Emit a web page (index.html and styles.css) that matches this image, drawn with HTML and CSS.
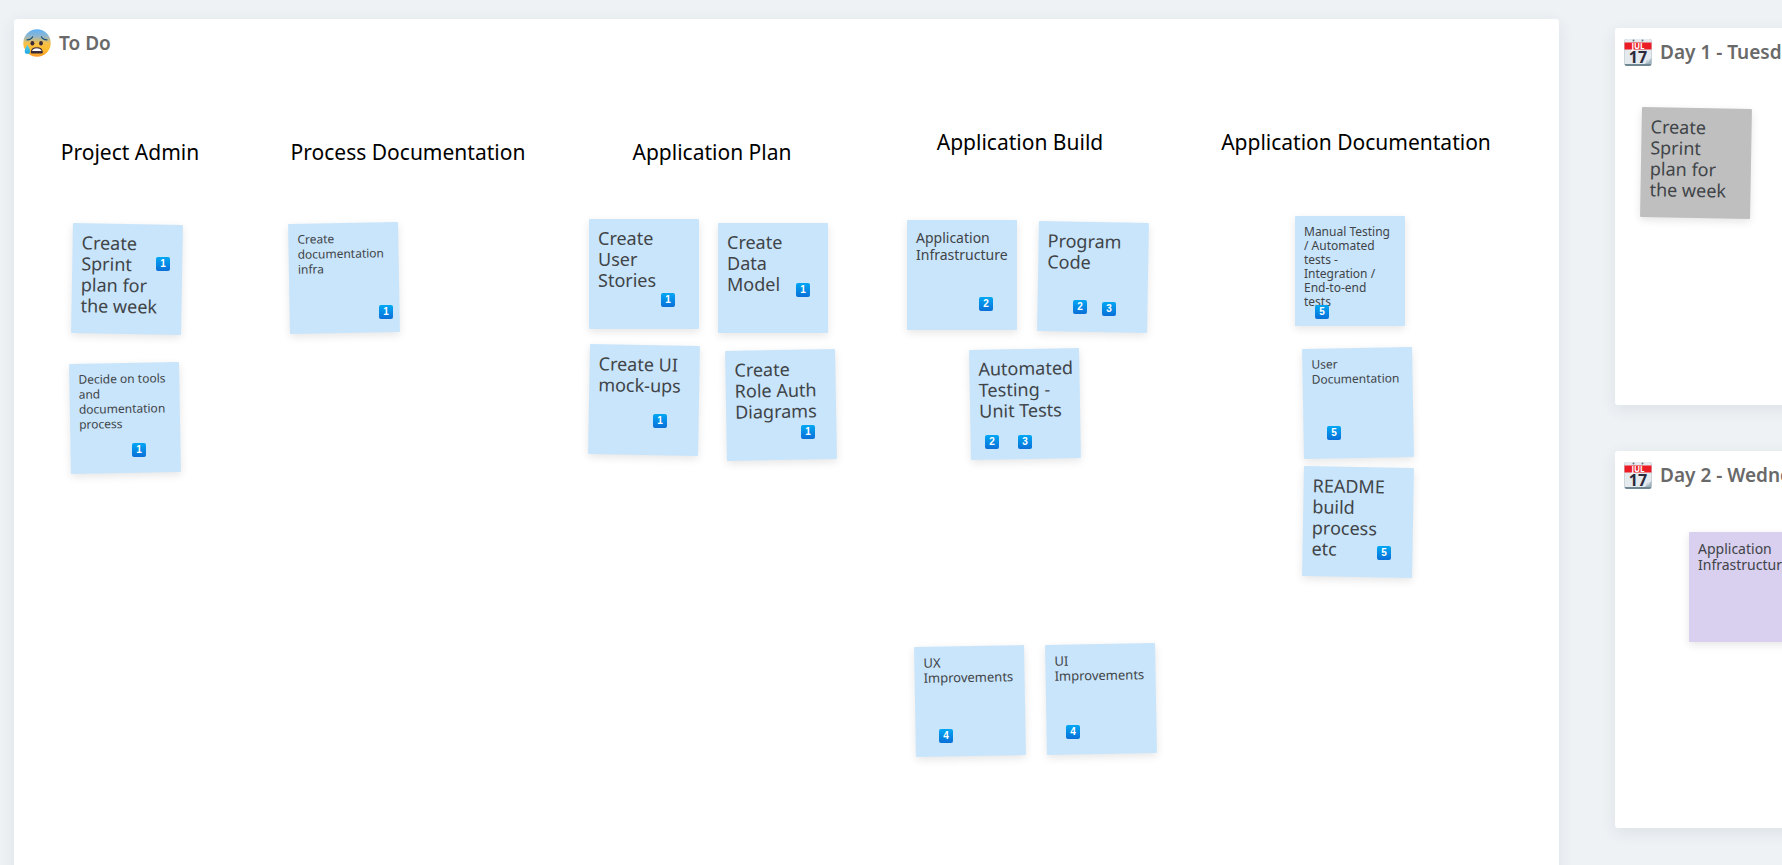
FILE: index.html
```html
<!DOCTYPE html>
<html lang="en">
<head>
<meta charset="utf-8">
<title>Sprint board</title>
<link rel="stylesheet" href="styles.css">
</head>
<body>
<svg class="defs" aria-hidden="true">
  <defs>
    <linearGradient id="face" x1="0" y1="0" x2="0" y2="1">
      <stop offset="0" stop-color="#5fb2f7"/>
      <stop offset=".25" stop-color="#8fb6cf"/>
      <stop offset=".5" stop-color="#f3c04a"/>
      <stop offset=".75" stop-color="#ffbc2c"/>
      <stop offset="1" stop-color="#fb9a2c"/>
    </linearGradient>
    <linearGradient id="drop" x1="0" y1="0" x2="0" y2="1">
      <stop offset="0" stop-color="#5fd0e8"/>
      <stop offset="1" stop-color="#19a9e4"/>
    </linearGradient>
    <symbol id="calendar" viewBox="0 0 28 28">
      <path d="M.5 3q0-2 2-2h23q2 0 2 2v23q0 2-2 2h-23q-2 0-2-2z" fill="#6f8792"/>
      <path d="M.5 3q0-2 2-2h23q2 0 2 2v23h-27z" fill="#e4eaee"/>
      <path d="M20.500 26q2-1.200 2.500-3.500 2.500-.5 4.500-2.500v6z" fill="#9fb3be"/>
      <path d="M21 25.800q2.500-1 2.300-3.600 2.700 0 4-2.200-1 4-6.300 5.800z" fill="#cbd7de"/>
      <path d="M.5 4.500h27v7h-27z" fill="#ec1c27"/>
      <circle cx="9.500" cy="2.500" r="1" fill="#66747c"/>
      <circle cx="18.500" cy="2.500" r="1" fill="#66747c"/>
      <text x="14" y="11" text-anchor="middle" class="cal-month">JUL</text>
      <text x="14" y="24.500" text-anchor="middle" class="cal-day">17</text>
    </symbol>
  </defs>
</svg>
<main class="board">
  <section class="frame frame-todo">
    <h1 class="frame-title">
      <svg class="emoji" viewBox="0 0 28 28" aria-hidden="true">
        <circle cx="14" cy="14" r="13.700" fill="url(#face)"/>
        <path d="M4 10.800q4.200-.2 5.500-2.900M24 10.800q-4.200-.2-5.500-2.900" fill="none" stroke="#17507c" stroke-width="1.200" stroke-linecap="round"/>
        <ellipse cx="9.400" cy="14.300" rx="1.900" ry="2.300" fill="#3b2b38"/>
        <ellipse cx="18" cy="14.300" rx="1.900" ry="2.300" fill="#3b2b38"/>
        <path d="M7.800 23.500q0-5.200 6-5.200t6 5.200q0 1-1 1h-10q-1 0-1-1z" fill="#3b2b38"/>
        <path d="M9.200 21.300q1.300-2 4.600-2t4.600 2v.7h-9.200z" fill="#fff"/>
        <path d="M4.400 15.800q2.700 3.700 2.700 6.100 0 2.900-2.700 2.900t-2.700-2.900q0-2.400 2.700-6.100z" fill="url(#drop)"/>
      </svg>
      To Do
    </h1>

    <h2 class="heading h-admin">Project Admin</h2>
    <h2 class="heading h-process">Process Documentation</h2>
    <h2 class="heading h-plan">Application Plan</h2>
    <h2 class="heading h-build">Application Build</h2>
    <h2 class="heading h-docs">Application Documentation</h2>

    <article class="note large tilt-right n-sprint">Create<br>Sprint<br>plan for<br>the week</article>
    <article class="note small tilt-left n-tools">Decide on tools<br>and<br>documentation<br>process</article>
    <article class="note small tilt-left n-docinfra">Create<br>documentation<br>infra</article>
    <article class="note large n-stories">Create<br>User<br>Stories</article>
    <article class="note large n-data">Create<br>Data<br>Model</article>
    <article class="note large tilt-right n-mock">Create UI<br>mock-ups</article>
    <article class="note large tilt-left n-auth">Create<br>Role Auth<br>Diagrams</article>
    <article class="note medium n-appinfra">Application<br>Infrastructure</article>
    <article class="note large tilt-right n-code">Program<br>Code</article>
    <article class="note large tilt-left n-unit">Automated<br>Testing -<br>Unit Tests</article>
    <article class="note tiny n-manual">Manual Testing<br>/ Automated<br>tests -<br>Integration /<br>End-to-end<br>tests</article>
    <article class="note small tilt-left n-userdoc">User<br>Documentation</article>
    <article class="note large tilt-right n-readme">README<br>build<br>process<br>etc</article>
    <article class="note regular tilt-left n-ux">UX<br>Improvements</article>
    <article class="note regular tilt-left n-ui">UI<br>Improvements</article>

    <span class="badge b-sprint">1</span>
    <span class="badge b-tools">1</span>
    <span class="badge b-docinfra">1</span>
    <span class="badge b-stories">1</span>
    <span class="badge b-data">1</span>
    <span class="badge b-mock">1</span>
    <span class="badge b-auth">1</span>
    <span class="badge b-appinfra">2</span>
    <span class="badge b-code-a">2</span>
    <span class="badge b-code-b">3</span>
    <span class="badge b-unit-a">2</span>
    <span class="badge b-unit-b">3</span>
    <span class="badge b-manual">5</span>
    <span class="badge b-userdoc">5</span>
    <span class="badge b-readme">5</span>
    <span class="badge b-ux">4</span>
    <span class="badge b-ui">4</span>
  </section>

  <div class="days">
    <section class="frame frame-day">
      <h1 class="frame-title"><svg class="emoji" aria-hidden="true"><use href="#calendar"/></svg>Day 1 - Tuesday</h1>
      <article class="note large gray tilt-right n-day1">Create<br>Sprint<br>plan for<br>the week</article>
    </section>
    <section class="frame frame-day">
      <h1 class="frame-title"><svg class="emoji" aria-hidden="true"><use href="#calendar"/></svg>Day 2 - Wednesday</h1>
      <article class="note medium purple n-day2">Application<br>Infrastructure</article>
    </section>
  </div>
</main>
</body>
</html>
```
FILE: styles.css
```css
* { box-sizing: border-box; }

body {
  margin: 0;
  background: #eef2f5;
  color: #000;
  font-family: "Noto Sans", "Open Sans", sans-serif;
  overflow: hidden;
}

.defs { position: absolute; width: 0; height: 0; }

.board {
  display: flex;
  gap: 56px;
  min-height: 100vh;
  padding: 19px 0 0 14px;
}

.frame {
  position: relative;
  background: #fff;
  border-radius: 3px;
  box-shadow: 0 4px 16px rgba(40, 60, 80, 0.09);
}

.frame-todo {
  flex: 1;
  margin-bottom: -20px;
}

.days {
  display: flex;
  flex-direction: column;
  gap: 46px;
  flex: 0 0 167px;
  min-width: 0;
  padding-top: 9px;
}

.frame-day {
  height: 377px;
  margin-right: -40px;
}

.frame-title {
  display: flex;
  align-items: center;
  gap: 8px;
  margin: 0;
  padding: 10px 9px;
  height: 48px;
  font-size: 19px;
  font-weight: 600;
  line-height: 28px;
  color: #696969;
  white-space: nowrap;
}

.emoji { flex: none; width: 28px; height: 28px; }

.cal-month { font: bold 8px "Noto Sans", sans-serif; fill: #fff; }
.cal-day { font: bold 16px "Noto Sans", sans-serif; fill: #2c2a3c; }

/* Column headings, each centred on its own anchor point */
.heading {
  position: absolute;
  width: 300px;
  margin: 0;
  font-size: 21px;
  font-weight: 400;
  line-height: 30px;
  text-align: center;
  white-space: nowrap;
}

.h-admin { left: -34px; top: 118px; }
.h-process { left: 244px; top: 118px; }
.h-plan { left: 548px; top: 118px; }
.h-build { left: 856px; top: 108px; }
.h-docs { left: 1192px; top: 108px; }

/* Sticky notes */
.note {
  position: absolute;
  width: 110px;
  height: 110px;
  padding: 9px;
  border-radius: 1px;
  background: #c9e5fb;
  color: #404448;
  box-shadow: 0 3px 8px rgba(0, 0, 0, 0.1);
  white-space: nowrap;
}

.large { font-size: 18px; line-height: 21px; }
.medium { font-size: 14px; line-height: 17px; }
.regular { font-size: 13px; line-height: 15px; }
.small { padding-top: 8px; font-size: 12px; line-height: 15px; }
.tiny { font-size: 12px; line-height: 14px; }

.gray { background: #bfbfbf; }
.purple { background: #d9cfee; }
.purple.medium { line-height: 16px; }

.tilt-right { transform: rotate(1deg); }
.tilt-left { transform: rotate(-1deg); }

.n-sprint { left: 58px; top: 205px; }
.n-tools { left: 56px; top: 344px; }
.n-docinfra { left: 275px; top: 204px; }
.n-stories { left: 575px; top: 200px; }
.n-data { left: 704px; top: 204px; }
.n-mock { left: 575px; top: 326px; }
.n-auth { left: 712px; top: 331px; }
.n-appinfra { left: 893px; top: 201px; }
.n-code { left: 1024px; top: 203px; }
.n-unit { left: 956px; top: 330px; }
.n-manual { left: 1281px; top: 197px; }
.n-userdoc { left: 1289px; top: 329px; }
.n-readme { left: 1289px; top: 448px; }
.n-ux { left: 901px; top: 627px; }
.n-ui { left: 1032px; top: 625px; }
.n-day1 { left: 26px; top: 80px; }
.n-day2 { left: 74px; top: 81px; }

/* Numbered stamps */
.badge {
  position: absolute;
  width: 14px;
  height: 14px;
  border-radius: 2px;
  background: linear-gradient(#00a8f4, #0a6fd8);
  color: #fff;
  font: bold 10px/14px "Liberation Sans", Arial, sans-serif;
  text-align: center;
}

.b-sprint { left: 142px; top: 238px; }
.b-tools { left: 118px; top: 424px; }
.b-docinfra { left: 365px; top: 286px; }
.b-stories { left: 647px; top: 274px; }
.b-data { left: 782px; top: 264px; }
.b-mock { left: 639px; top: 395px; }
.b-auth { left: 787px; top: 406px; }
.b-appinfra { left: 965px; top: 278px; }
.b-code-a { left: 1059px; top: 281px; }
.b-code-b { left: 1088px; top: 283px; }
.b-unit-a { left: 971px; top: 416px; }
.b-unit-b { left: 1004px; top: 416px; }
.b-manual { left: 1301px; top: 286px; }
.b-userdoc { left: 1313px; top: 407px; }
.b-readme { left: 1363px; top: 527px; }
.b-ux { left: 925px; top: 710px; }
.b-ui { left: 1052px; top: 706px; }
```
